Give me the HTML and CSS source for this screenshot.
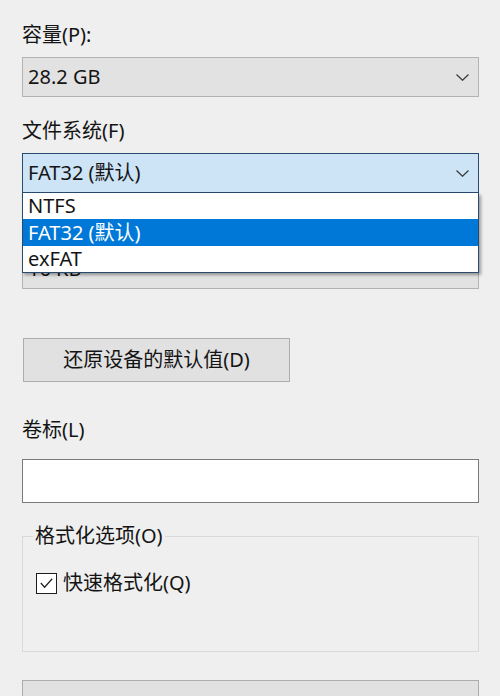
FILE: index.html
```html
<!DOCTYPE html>
<html lang="zh-CN">
<head>
<meta charset="utf-8">
<title>格式化</title>
<link rel="stylesheet" href="styles.css">
</head>
<body>
<div class="page">
  <div class="label">容量(P):</div>
  <div class="combo">
    <span class="combo-text">28.2 GB</span>
    <svg class="chev" width="13" height="7" viewBox="0 0 13 7"><polyline points="0.5,0.5 6.5,6.3 12.5,0.5" fill="none" stroke="#3a3a3a" stroke-width="1.2"/></svg>
  </div>

  <div class="label gap">文件系统(F)</div>
  <div class="combo-wrap">
    <div class="combo combo-open">
      <span class="combo-text">FAT32 (默认)</span>
      <svg class="chev" width="13" height="7" viewBox="0 0 13 7"><polyline points="0.5,0.5 6.5,6.3 12.5,0.5" fill="none" stroke="#3a3a3a" stroke-width="1.2"/></svg>
    </div>
    <ul class="menu">
      <li class="item">NTFS</li>
      <li class="item selected">FAT32 (默认)</li>
      <li class="item">exFAT</li>
    </ul>
  </div>

  <div class="label gap" aria-hidden="true"></div>
  <div class="combo">
    <span class="combo-text">16 KB</span>
    <svg class="chev" width="13" height="7" viewBox="0 0 13 7"><polyline points="0.5,0.5 6.5,6.3 12.5,0.5" fill="none" stroke="#3a3a3a" stroke-width="1.2"/></svg>
  </div>

  <button class="btn">还原设备的默认值(D)</button>

  <div class="label label-vol">卷标(L)</div>
  <div class="input"></div>

  <fieldset class="group">
    <legend class="legend">格式化选项(O)</legend>
    <div class="check-row">
      <span class="checkbox">
        <svg width="20" height="20" viewBox="0 0 20 20"><polyline points="4,10 8,14.5 16,5.5" fill="none" stroke="#222" stroke-width="1.3"/></svg>
      </span>
      <span class="check-label">快速格式化(Q)</span>
    </div>
  </fieldset>

  <div class="bottom-btn"></div>
</div>
</body>
</html>
```

FILE: styles.css
```css
* { box-sizing: border-box; }
html, body {
  margin: 0;
  padding: 0;
  background: #efefef;
  overflow: hidden;
}
body {
  font-family: "Noto Sans", "Noto Sans CJK SC", sans-serif;
  font-size: 20px;
  color: #141414;
}
.page {
  padding: 23px 0 0 22px;
  width: 479px;
}
.label {
  height: 24px;
  line-height: 24px;
  white-space: nowrap;
}
.label.gap { margin-top: 22px; }
.combo {
  margin-top: 10px;
  height: 40px;
  width: 457px;
  background: #e2e2e2;
  border: 1px solid #b3b3b3;
  display: flex;
  align-items: center;
  justify-content: space-between;
  padding: 0 8px 0 5px;
  line-height: 24px;
}
.combo-wrap {
  position: relative;
}
.combo-open {
  background: #cde3f6;
  border-color: #294b70;
}
.chev { display: block; margin-right: 1px; }
.menu {
  position: absolute;
  top: 40px;
  left: 0;
  width: 457px;
  margin: 0;
  padding: 0;
  list-style: none;
  background: #fff;
  border: 1px solid #294b70;
  border-top: none;
  box-shadow: 2px 2px 3px rgba(0, 0, 0, 0.35);
  z-index: 2;
}
.item {
  height: 26px;
  line-height: 26px;
  padding-left: 5px;
}
.item.selected {
  height: 27px;
  line-height: 27px;
  background: #0078d7;
  color: #fff;
}
.btn {
  display: block;
  margin: 49px 0 0 1px;
  width: 267px;
  height: 44px;
  background: #e1e1e1;
  border: 1px solid #adadad;
  font: inherit;
  color: #141414;
  line-height: 24px;
  padding: 0;
}
.label-vol { margin-top: 36px; }
.input {
  margin-top: 17px;
  width: 457px;
  height: 44px;
  background: #fff;
  border: 1px solid #7a7a7a;
}
.group {
  margin: 21px 0 0 0;
  width: 457px;
  border: 1px solid #dadada;
  padding: 0 10px 56px 10px;
  min-width: 0;
}
.legend {
  padding: 0 2px;
  line-height: 24px;
  height: 24px;
}
.check-row {
  margin-top: 23px;
  height: 24px;
  display: flex;
  align-items: center;
  margin-left: 3px;
}
.checkbox {
  width: 21px;
  height: 21px;
  border: 1px solid #1e1e1e;
  background: #fff;
  display: flex;
  align-items: center;
  justify-content: center;
}
.checkbox svg { display: block; }
.check-label {
  margin-left: 6px;
  line-height: 24px;
}
.bottom-btn {
  margin-top: 28px;
  width: 457px;
  height: 44px;
  background: #e1e1e1;
  border: 1px solid #adadad;
}
```
